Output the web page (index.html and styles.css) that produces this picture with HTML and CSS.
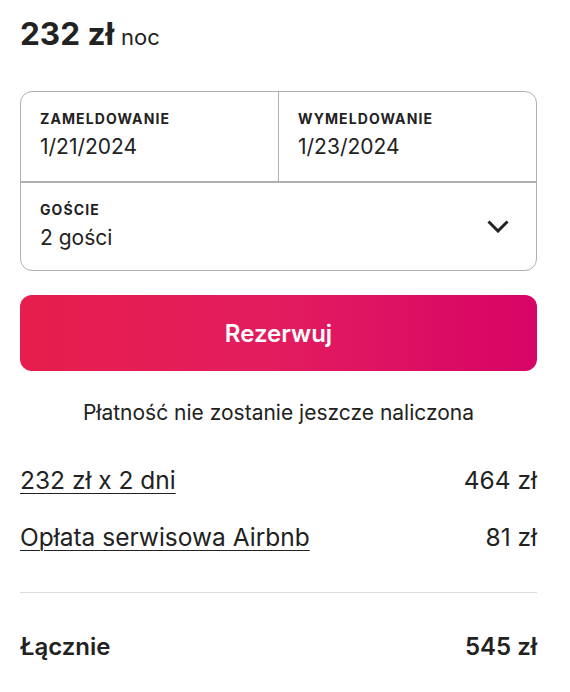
FILE: index.html
```
<!DOCTYPE html>
<html lang="pl">
<head>
  <meta charset="UTF-8" />
  <meta name="viewport" content="width=device-width, initial-scale=1.0" />
  <title>Rezerwacja</title>
  <link rel="stylesheet" href="styles.css">
</head>
<body>
  <div class="booking">
    <div class="price">
      <span class="amount">232 zł</span>
      <span class="per">noc</span>
    </div>

    <div class="picker">
      <div class="dates">
        <div class="field">
          <div class="label">ZAMELDOWANIE</div>
          <div class="value">1/21/2024</div>
        </div>
        <div class="field field-right">
          <div class="label">WYMELDOWANIE</div>
          <div class="value">1/23/2024</div>
        </div>
      </div>
      <div class="field guests">
        <div>
          <div class="label">GOŚCIE</div>
          <div class="value">2 gości</div>
        </div>
        <svg class="chevron" viewBox="0 0 22 13" width="22" height="13">
          <path d="M1.5 1.5 L11 11 L20.5 1.5" fill="none" stroke="#222" stroke-width="3" />
        </svg>
      </div>
    </div>

    <button class="reserve">Rezerwuj</button>
    <p class="note">Płatność nie zostanie jeszcze naliczona</p>

    <div class="line">
      <a href="#" class="line-name">232 zł x 2 dni</a>
      <span>464 zł</span>
    </div>
    <div class="line">
      <a href="#" class="line-name">Opłata serwisowa Airbnb</a>
      <span>81 zł</span>
    </div>

    <div class="total">
      <span>Łącznie</span>
      <span>545 zł</span>
    </div>
  </div>
</body>
</html>
```

FILE: styles.css
```
* { margin: 0; padding: 0; box-sizing: border-box; }
body {
  font-family: 'Inter', 'Roboto', sans-serif;
  color: #222;
  background: #fff;
}

.booking {
  width: 517px;
  margin-left: 20px;
  padding-top: 15px;
}

/* Price header */
.price { display: flex; align-items: baseline; gap: 7px; line-height: 38px; }
.price .amount { font-size: 31.5px; font-weight: 700; }
.price .per { font-size: 22px; }

/* Date / guests picker */
.picker {
  margin-top: 35px;
  border: 1px solid #b0b0b0;
  border-radius: 12px;
}
.dates {
  display: flex;
  border-bottom: 2px solid #b0b0b0;
}
.field { flex: 1; padding: 19px 19px 21px; }
.field-right { border-left: 1px solid #b0b0b0; }
.label { font-size: 14px; line-height: 16px; font-weight: 700; letter-spacing: 1.1px; }
.value { font-size: 21px; line-height: 26px; margin-top: 7px; }
.guests {
  display: flex;
  align-items: center;
  justify-content: space-between;
  padding: 19px 27px 19px 19px;
}
.chevron { display: block; }

/* Reserve button */
.reserve {
  display: block;
  width: 100%;
  height: 76px;
  margin-top: 24px;
  border: none;
  border-radius: 12px;
  background: linear-gradient(to right, #e61e4d 0%, #e31c5f 50%, #d70466 100%);
  color: #fff;
  font-family: inherit;
  font-size: 24px;
  font-weight: 600;
}

.note {
  text-align: center;
  font-size: 21px;
  line-height: 26px;
  margin-top: 29px;
}

/* Price lines */
.line {
  display: flex;
  justify-content: space-between;
  font-size: 24.5px;
  line-height: 30px;
  margin-top: 39px;
}
.line + .line { margin-top: 27px; }
.line-name {
  color: #222;
  text-decoration: underline;
  text-underline-offset: 4px;
  text-decoration-thickness: 1px;
}

.total {
  display: flex;
  justify-content: space-between;
  font-size: 24px;
  line-height: 30px;
  font-weight: 600;
  margin-top: 40px;
  padding-top: 39px;
  border-top: 1px solid #dddddd;
}
```
